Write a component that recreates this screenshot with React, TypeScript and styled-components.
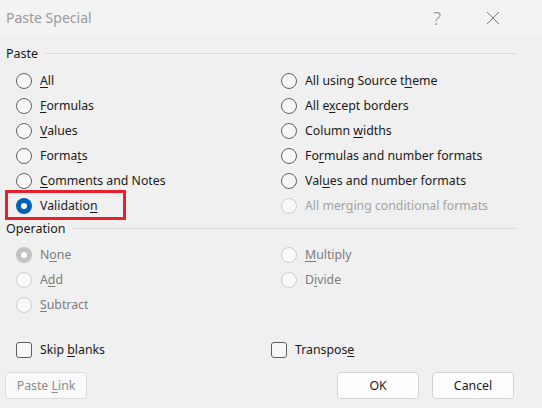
import React from "react";
import styled, { createGlobalStyle, css } from "styled-components";

const GlobalStyle = createGlobalStyle`
  html, body { margin: 0; padding: 0; background: #f0f0f0; }
  body { font-family: "Noto Sans", "Segoe UI", sans-serif; font-size: 12px; color: #1a1a1a; }
  *, *::before, *::after { box-sizing: border-box; }
`;

const Dialog = styled.div`
  width: 542px;
  height: 408px;
  background: #f0f0f0;
  display: flex;
  flex-direction: column;
  overflow: hidden;
`;

const TitleBar = styled.div`
  height: 35px;
  flex: none;
  background: #f3f3f3;
  display: flex;
  align-items: center;
  padding-left: 6px;
  padding-right: 21px;
`;

const Title = styled.div`
  flex: 1;
  font-size: 14px;
  color: #9a9a9a;
  padding-bottom: 1px;
`;

const TitleButton = styled.div`
  width: 56px;
  height: 35px;
  display: flex;
  align-items: center;
  justify-content: center;
  color: #8e8e8e;
  font-family: "Noto Sans", sans-serif;
  font-weight: 300;
  font-size: 19px;
`;

const Body = styled.div`
  flex: 1;
  display: flex;
  flex-direction: column;
  padding: 9px 26px 0 6px;
`;

const SectionHeader = styled.div<{ $mt?: number }>`
  display: flex;
  align-items: center;
  height: 18px;
  margin-top: ${(p) => p.$mt ?? 0}px;
  gap: 8px;
  font-size: 12.5px;
  color: #1a1a1a;
  &::after {
    content: "";
    flex: 1;
    height: 1px;
    background: #dadada;
  }
`;

const OptionGrid = styled.div<{ $mt: number }>`
  display: grid;
  grid-template-columns: 265px 1fr;
  grid-auto-rows: 25px;
  padding-left: 10px;
  margin-top: ${(p) => p.$mt}px;
`;

const Option = styled.label<{ $disabled?: boolean; $faint?: boolean }>`
  display: flex;
  align-items: center;
  gap: 8px;
  font-size: 12.3px;
  white-space: nowrap;
  color: ${(p) => (p.$faint ? "#a3a3a3" : p.$disabled ? "#7c7c7c" : "#1a1a1a")};
`;

const Text = styled.span`
  white-space: nowrap;
  u { text-underline-offset: 2px; }
`;

const Highlight = styled.div`
  position: relative;
  display: flex;
  align-items: center;
  &::before {
    content: "";
    position: absolute;
    left: -11px;
    top: -3px;
    width: 121px;
    height: 30px;
    border: 3px solid #e8202a;
    pointer-events: none;
  }
`;

const Radio = styled.span<{ $checked?: boolean; $disabled?: boolean; $faint?: boolean }>`
  width: 16px;
  height: 16px;
  border-radius: 50%;
  flex: none;
  position: relative;
  border: 1px solid #626262;
  background: #f7f7f7;
  ${(p) =>
    (p.$disabled || p.$faint) &&
    css`
      border-color: #cdcdcd;
      background: #f9f9f9;
    `}
  ${(p) =>
    p.$checked &&
    css`
      border: none;
      background: ${p.$disabled ? "#c2c2c2" : "#005fb8"};
      &::after {
        content: "";
        position: absolute;
        left: 5px;
        top: 5px;
        width: 6px;
        height: 6px;
        border-radius: 50%;
        background: #ffffff;
      }
    `}
`;

const CheckRow = styled.div`
  display: grid;
  grid-template-columns: 255px 1fr;
  height: 25px;
  margin-top: 20px;
  padding-left: 10px;
`;

const CheckItem = styled.label`
  display: flex;
  align-items: center;
  gap: 8px;
  font-size: 12.3px;
  color: #1a1a1a;
`;

const CheckBox = styled.span`
  width: 16px;
  height: 16px;
  border: 1px solid #5e5e5e;
  border-radius: 3px;
  background: #f7f7f7;
  flex: none;
`;

const ButtonRow = styled.div`
  display: flex;
  align-items: center;
  margin-top: 10px;
  margin-left: -1px;
  margin-right: 2px;
  gap: 13px;
`;

const Spacer = styled.div`
  flex: 1;
`;

const Button = styled.div<{ $disabled?: boolean }>`
  width: 82px;
  height: 27px;
  border-radius: 4px;
  border: 1px solid ${(p) => (p.$disabled ? "#dcdcdc" : "#d3d3d3")};
  background: ${(p) => (p.$disabled ? "#f9f9f9" : "#fdfdfd")};
  color: ${(p) => (p.$disabled ? "#8c8c8c" : "#1a1a1a")};
  display: flex;
  align-items: center;
  justify-content: center;
  font-size: 12.3px;
  padding-bottom: 1px;
`;

type Opt = { node: React.ReactNode; checked?: boolean; disabled?: boolean; faint?: boolean };

const pasteLeft: Opt[] = [
  { node: <><u>A</u>ll</> },
  { node: <><u>F</u>ormulas</> },
  { node: <><u>V</u>alues</> },
  { node: <>Forma<u>t</u>s</> },
  { node: <><u>C</u>omments and Notes</> },
  { node: <>Validatio<u>n</u></>, checked: true },
];
const pasteRight: Opt[] = [
  { node: <>All using Source t<u>h</u>eme</> },
  { node: <>All e<u>x</u>cept borders</> },
  { node: <>Column <u>w</u>idths</> },
  { node: <>Fo<u>r</u>mulas and number formats</> },
  { node: <>Val<u>u</u>es and number formats</> },
  { node: <>All mer<u>g</u>ing conditional formats</>, faint: true },
];

const opLeft: Opt[] = [
  { node: <>N<u>o</u>ne</>, checked: true, disabled: true },
  { node: <>A<u>d</u>d</>, disabled: true },
  { node: <><u>S</u>ubtract</>, disabled: true },
];
const opRight: Opt[] = [
  { node: <><u>M</u>ultiply</>, disabled: true },
  { node: <>D<u>i</u>vide</>, disabled: true },
];

function renderOpt(o: Opt) {
  const inner = (
    <Option $disabled={o.disabled} $faint={o.faint}>
      <Radio $checked={o.checked} $disabled={o.disabled} $faint={o.faint} />
      <Text>{o.node}</Text>
    </Option>
  );
  return o.checked && !o.disabled ? <Highlight>{inner}</Highlight> : inner;
}

function interleave(left: Opt[], right: Opt[]) {
  const rows = Math.max(left.length, right.length);
  const out: React.ReactNode[] = [];
  for (let i = 0; i < rows; i++) {
    out.push(<React.Fragment key={`l${i}`}>{left[i] ? renderOpt(left[i]) : <div />}</React.Fragment>);
    out.push(<React.Fragment key={`r${i}`}>{right[i] ? renderOpt(right[i]) : <div />}</React.Fragment>);
  }
  return out;
}

export default function App() {
  return (
    <>
      <GlobalStyle />
      <Dialog>
        <TitleBar>
          <Title>Paste Special</Title>
          <TitleButton>?</TitleButton>
          <TitleButton>
            <svg width="14" height="14" viewBox="0 0 14 14">
              <path d="M1 1 L13 13 M13 1 L1 13" stroke="#7a7a7a" strokeWidth="1" fill="none" />
            </svg>
          </TitleButton>
        </TitleBar>
        <Body>
          <SectionHeader>Paste</SectionHeader>
          <OptionGrid $mt={6}>{interleave(pasteLeft, pasteRight)}</OptionGrid>
          <SectionHeader $mt={1}>Operation</SectionHeader>
          <OptionGrid $mt={5}>{interleave(opLeft, opRight)}</OptionGrid>
          <CheckRow>
            <CheckItem>
              <CheckBox />
              <Text>Skip <u>b</u>lanks</Text>
            </CheckItem>
            <CheckItem>
              <CheckBox />
              <Text>Transpos<u>e</u></Text>
            </CheckItem>
          </CheckRow>
          <ButtonRow>
            <Button $disabled>
              <Text>Paste <u>L</u>ink</Text>
            </Button>
            <Spacer />
            <Button>OK</Button>
            <Button>Cancel</Button>
          </ButtonRow>
        </Body>
      </Dialog>
    </>
  );
}
